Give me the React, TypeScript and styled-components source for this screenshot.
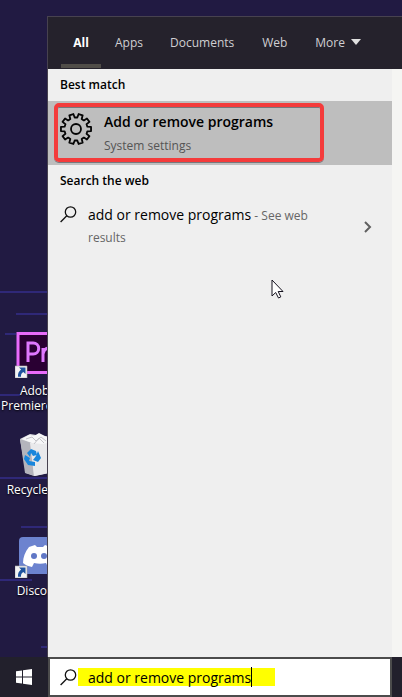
import React, { useState } from "react";
import styled, { createGlobalStyle } from "styled-components";

const Global = createGlobalStyle`
  * { box-sizing: border-box; }
  body {
    margin: 0;
    font-family: "Open Sans", "Noto Sans", sans-serif;
    font-size: 12px;
    color: #000;
  }
  button, input { font: inherit; color: inherit; border: 0; padding: 0; margin: 0; background: none; }
  h2 { margin: 0; }
  svg { display: block; flex: none; }
`;

const line = "linear-gradient(#2f2878, #2f2878)";

const Screen = styled.div`
  position: relative;
  display: flex;
  flex-direction: column;
  height: 100vh;
  overflow: hidden;
  background-color: #211a42;
  background-image: ${Array(8).fill(line).join(", ")};
  background-repeat: no-repeat;
  background-size: 47px 2px, 31px 2px, 11px 2px, 20px 2px, 47px 2px, 26px 2px, 32px 2px, 7px 2px;
  background-position: 0 291px, 16px 313px, 5px 333px, 0 394px, 0 477px, 21px 526px, 0 579px, 41px 646px;
`;

const Workspace = styled.div`
  flex: 1;
  min-height: 0;
  display: flex;
`;

const Desktop = styled.nav`
  width: 47px;
  flex: none;
  overflow: hidden;
  display: flex;
  flex-direction: column;
  gap: 20px;
  padding-top: 332px;
`;

const Shortcut = styled.a`
  display: flex;
  flex-direction: column;
  align-items: center;
  gap: 5px;
  width: 76px;
  color: #fff;
  line-height: 15px;
  text-align: center;
  text-decoration: none;
  text-shadow: 0 1px 2px #000;
`;

const Caption = styled.span`
  min-height: 30px;
  white-space: nowrap;
`;

const Panel = styled.main`
  flex: 1;
  min-width: 0;
  margin-top: 16px;
  display: flex;
  flex-direction: column;
  border: solid #47424f;
  border-width: 1px 0 0 1px;
  background: #f5f5f3;
`;

const Tabs = styled.div`
  display: flex;
  height: 52px;
  flex: none;
  padding-left: 13px;
  gap: 14px;
  background: #25222c;
`;

const Tab = styled.button<{ $active?: boolean }>`
  display: flex;
  align-items: center;
  justify-content: center;
  gap: 6px;
  min-width: 40px;
  padding: 3px 0 0;
  border-bottom: 4px solid ${(p) => (p.$active ? "#504d48" : "transparent")};
  margin-bottom: 1px;
  color: ${(p) => (p.$active ? "#fff" : "#d0cfd2")};
  font-weight: ${(p) => (p.$active ? 700 : 400)};
  & + & { padding-right: 13px; }
`;

const Results = styled.div`
  flex: 1;
  margin-right: 10px;
  background: #efefef;
`;

const Heading = styled.h2`
  height: 32px;
  padding-left: 12px;
  font-size: 12px;
  line-height: 32px;
  font-weight: 600;
`;

const Result = styled.button<{ $selected?: boolean }>`
  position: relative;
  display: flex;
  align-items: flex-start;
  width: 100%;
  min-height: ${(p) => (p.$selected ? 64 : 56)}px;
  padding: ${(p) => (p.$selected ? 10 : 7)}px 20px 4px 12px;
  gap: 12px;
  text-align: left;
  background: ${(p) => (p.$selected ? "#bebebe" : "transparent")};
`;

const Marker = styled.span`
  position: absolute;
  inset: 2px 68px 3px 6px;
  border: 4px solid #f43b3b;
  border-radius: 5px;
  box-shadow: inset 0 1px 0 #77777c, 0 1px 0 #77777c;
`;

const IconSlot = styled.span<{ $small?: boolean }>`
  width: ${(p) => (p.$small ? 16 : 32)}px;
  flex: none;
  padding-top: 2px;
`;

const Label = styled.span`
  flex: 1;
  padding-right: 32px;
  line-height: 22px;
`;

const Name = styled.span<{ $strong?: boolean }>`
  font-size: 14px;
  font-weight: ${(p) => (p.$strong ? 600 : 400)};
`;

const Hint = styled.span`
  color: #666;
`;

const Block = styled(Hint)`
  display: block;
  padding-top: 1px;
  color: #555;
`;

const Arrow = styled.span`
  align-self: center;
`;

const Taskbar = styled.footer`
  display: flex;
  flex: none;
  height: 40px;
  background: #22202c;
`;

const Start = styled.button`
  width: 48px;
  display: flex;
  align-items: center;
  justify-content: center;
`;

const SearchBox = styled.label`
  flex: 1;
  min-width: 0;
  display: flex;
  align-items: center;
  margin-right: 10px;
  padding-left: 10px;
  gap: 1px;
  border: 2px solid #4c4c4c;
  background: #fff;
`;

const Highlight = styled.span`
  display: flex;
  height: 18px;
  align-items: center;
  padding: 0 23px 0 10px;
  background: #ff0;
`;

const SearchInput = styled.input`
  field-sizing: content;
  height: 20px;
  font-size: 14px;
  outline: 0;
`;

const Caret = styled.span`
  width: 1px;
  height: 20px;
  background: #000;
`;

const Pointer = styled.svg`
  position: absolute;
  left: 271px;
  top: 279px;
`;

const Magnifier = () => (
  <svg width="17" height="17" viewBox="0 0 17 17" fill="none" stroke="#111" strokeWidth="1.3">
    <circle cx="10.5" cy="6" r="5.2" />
    <path d="M6.8 9.7 .6 16" />
  </svg>
);

const gearPath = (() => {
  const points: string[] = [];
  const teeth = 10;
  for (let i = 0; i < teeth; i++) {
    const centre = (i + 0.5) * ((Math.PI * 2) / teeth);
    [[-0.2, 11.6], [-0.14, 15.2], [0.14, 15.2], [0.2, 11.6]].forEach(([offset, radius]) => {
      points.push(`${(16 + radius * Math.sin(centre + offset)).toFixed(2)} ${(16 - radius * Math.cos(centre + offset)).toFixed(2)}`);
    });
  }
  return `M${points.join("L")}Z`;
})();

const Gear = () => (
  <svg width="32" height="32" viewBox="0 0 32 32" fill="none" stroke="#050505" strokeWidth="1.8" strokeLinejoin="round">
    <path d={gearPath} />
    <circle cx="16" cy="16" r="5" />
  </svg>
);

const ShortcutBadge = () => (
  <g>
    <path d="M0 34h12v12H0z" fill="#f4f4f4" stroke="#aaa" strokeWidth=".6" />
    <path d="M4 35.5h6.5V42l-2.2-2c-2 1.2-2.4 2.6-2.3 4.8H3c-.3-3.2.8-5.4 3.1-7.2z" fill="#1e539e" />
  </g>
);

const Premiere = () => (
  <svg width="46" height="46" viewBox="0 0 46 46">
    <path d="M3 1.5h41v39H3z" fill="#2a0033" stroke="#e86bfa" strokeWidth="3" />
    <path d="M13 30V11h5.2a5.2 5.2 0 0 1 0 11H13M28 30V16m0 6c1-4 3-6 6-6" fill="none" stroke="#df78ff" strokeWidth="3" />
    <ShortcutBadge />
  </svg>
);

const RecycleBin = () => (
  <svg width="36" height="44" viewBox="0 0 36 44">
    <path d="M0 6 10 1l18 3 6 4-5 32-14 3-9-3z" fill="#dfe0e3" />
    <path d="m0 6 5 34 9 3-2-33z" fill="#b4b4bc" />
    <path d="m10 10 23-2-5 32-14 3z" fill="#e9e9eb" />
    <path d="m2 6 7-4 5 1 5-3 6 3 5 1 3 5-11 2-10-1z" fill="#f7f7f8" />
    <path d="m6 6 6-2 4 4 5-4 5 4M14 11l5-6 5 5" fill="none" stroke="#c4c4c8" />
    <g fill="#1986dc">
      <path d="m7 20 4-4 5 2 1 4-4 1-2-3-1 4z" />
      <path d="m18 18 3 7-3 4-5-2 3-4z" />
      <path d="m5 22 5 3-1 3 6 1v4l-7-1-4-6z" />
    </g>
  </svg>
);

const Discord = () => (
  <svg width="46" height="46" viewBox="0 0 46 46">
    <rect x="4" y="5" width="38" height="37" rx="4" fill="#6c83cf" />
    <path d="m14 15 6-2 2 2h6l2-2 6 2c4 6 6 11 5 16-3 3-6 4-8 4l-2-4c-4 1-8 1-12 0l-2 4c-4-1-7-2-9-4 0-6 2-11 6-16z" fill="#fff" />
    <circle cx="19" cy="24" r="3" fill="#6077c6" />
    <circle cx="29" cy="24" r="3" fill="#6077c6" />
    <ShortcutBadge />
  </svg>
);

export default function App() {
  const [query, setQuery] = useState("add or remove programs");
  return (
    <Screen>
      <Global />
      <Workspace>
        <Desktop aria-label="Desktop">
          <Shortcut href="#premiere"><Premiere /><Caption>Adobe<br />Premiere Pro</Caption></Shortcut>
          <Shortcut href="#recycle"><RecycleBin /><Caption>Recycle Bin</Caption></Shortcut>
          <Shortcut href="#discord"><Discord /><Caption>Discord</Caption></Shortcut>
        </Desktop>
        <Panel>
          <Tabs>
            <Tab $active>All</Tab>
            <Tab>Apps</Tab>
            <Tab>Documents</Tab>
            <Tab>Web</Tab>
            <Tab>
              More
              <svg width="10" height="6" viewBox="0 0 10 6"><path d="M0 0h10L5 6z" fill="#e0e0e0" /></svg>
            </Tab>
          </Tabs>
          <Results>
            <Heading>Best match</Heading>
            <Result $selected>
              <IconSlot><Gear /></IconSlot>
              <Label>
                <Name $strong>Add or remove programs</Name>
                <Block>System settings</Block>
              </Label>
              <Marker />
            </Result>
            <Heading>Search the web</Heading>
            <Result>
              <IconSlot $small><Magnifier /></IconSlot>
              <Label>
                <Name>add or remove programs</Name> <Hint>- See web results</Hint>
              </Label>
              <Arrow>
                <svg width="8" height="12" viewBox="0 0 8 12" fill="none" stroke="#606060" strokeWidth="2"><path d="m1 1 5 5-5 5" /></svg>
              </Arrow>
            </Result>
          </Results>
        </Panel>
      </Workspace>
      <Taskbar>
        <Start aria-label="Start">
          <svg width="16" height="16" viewBox="0 0 16 16" fill="#fff"><path d="M0 2.2 6 1.4v6.1H0zM7 1.2 16 0v7.5H7zM0 8.5h6v6.1l-6-.8zM7 8.5h9V16l-9-1.2z" /></svg>
        </Start>
        <SearchBox>
          <Magnifier />
          <Highlight>
            <SearchInput aria-label="Search" value={query} onChange={(e) => setQuery(e.target.value)} />
            <Caret />
          </Highlight>
        </SearchBox>
      </Taskbar>
      <Pointer width="13" height="20" viewBox="0 0 13 20" aria-hidden="true">
        <path d="M1 1v16l3.7-3.5L7.5 19l2.3-1.1L7.2 12.5H12z" fill="#fff" stroke="#15121f" strokeWidth="1" />
      </Pointer>
    </Screen>
  );
}
